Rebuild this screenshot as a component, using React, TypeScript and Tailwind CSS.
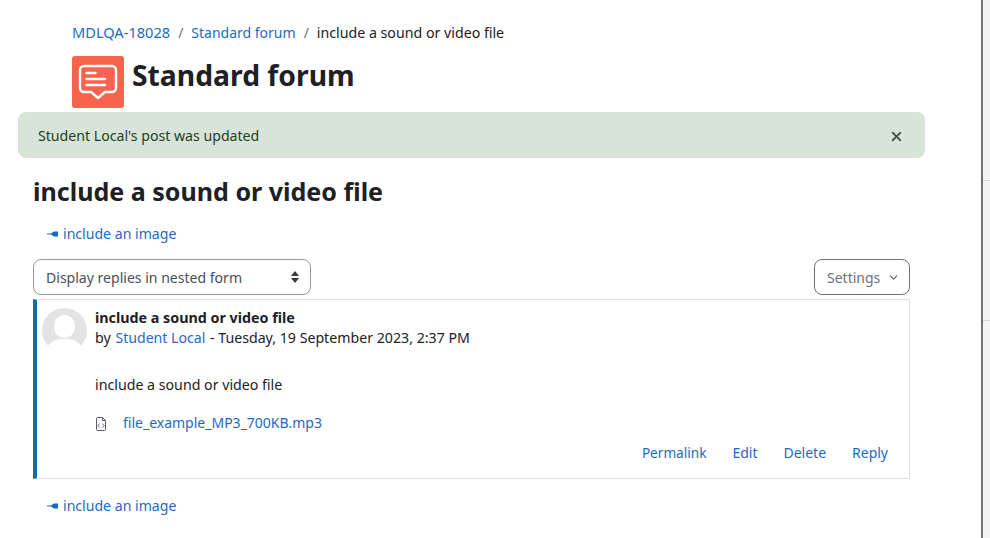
import { ChevronDown, X } from 'lucide-react'

const font = "font-['Noto_Sans','Open_Sans',sans-serif]"

function NavLink() {
  return (
    <a className="flex items-center gap-[5px] text-[14.1px] leading-[20px] text-[#1d6bc0]">
      <svg className="w-[11px] h-[6px]" viewBox="0 0 11 6" fill="#0f6cbf">
        <path d="M0 2.500h4L7 0.500h4v5H7L4 3.500H0z" />
      </svg>
      include an image
    </a>
  )
}

export default function App() {
  return (
    <div className={`${font} flex h-[538px] w-[990px] overflow-hidden bg-white text-[14px] text-[#1d2125]`}>
      <main className="w-[981px] shrink-0 border-r-2 border-[#6f7479] box-content">
        {/* Breadcrumb */}
        <div className="flex items-baseline h-[20px] mt-[22px] ml-[72px] leading-[20px]">
          <a className="text-[#1d6bc0] text-[14.6px] leading-[20px]">MDLQA-18028</a>
          <span className="mx-[8px] text-[#6a737b]">/</span>
          <a className="text-[#1d6bc0]">Standard forum</a>
          <span className="mx-[8px] text-[#6a737b]">/</span>
          <span className="text-[14.2px]">include a sound or video file</span>
        </div>

        {/* Page header */}
        <div className="flex items-center gap-[8px] ml-[72px] mt-[14px]">
          <div className="w-[52px] h-[52px] rounded-[3px] bg-[#f7634d]">
            <svg className="w-[52px] h-[52px]" viewBox="0 0 52 52" fill="none" stroke="white" strokeWidth="2.4" strokeLinecap="round" strokeLinejoin="round">
              <path d="M12 10h28a4 4 0 0 1 4 4v18a4 4 0 0 1-4 4h-7l-7 6-7-6h-7a4 4 0 0 1-4-4V14a4 4 0 0 1 4-4z" />
              <path d="M14.500 17h9M14.500 23h18.500M14.500 29h18.500" />
            </svg>
          </div>
          <h1 className="text-[28.3px] font-bold leading-[38px] -mt-[14px]">Standard forum</h1>
        </div>

        {/* Alert */}
        <div className="flex items-center justify-between ml-[18px] mt-[4px] w-[907px] h-[46px] rounded-[8px] bg-[#d8e4d8] pl-[20px] pr-[21px] text-[14.13px] text-[#1c3f26]">
          <span className="mt-[1px]">Student Local's post was updated</span>
          <X className="w-[15px] h-[15px] mt-[3px] text-[#4f5650]" strokeWidth={3.2} />
        </div>

        <div className="ml-[33px] w-[877px]">
          <h2 className="mt-[17px] text-[25.050px] font-bold leading-[32px]">include a sound or video file</h2>
          <div className="mt-[17px] ml-[14px]">
            <NavLink />
          </div>

          {/* Controls */}
          <div className="flex justify-between mt-[15px]">
            <div className="flex items-center justify-between w-[278px] h-[36px] rounded-[8px] border border-[#8f959e] pl-[12px] pr-[11px] text-[#495057]">
              <span className="text-[14.06px] mt-[1px]">Display replies in nested form</span>
              <svg className="w-[8px] h-[12px]" viewBox="0 0 8 12" fill="#343a40">
                <path d="M4 0l4 5H0zM4 12L0 7h8z" />
              </svg>
            </div>
            <div className="flex items-center gap-[7px] w-[96px] h-[36px] rounded-[8px] border border-[#6a737b] pl-[12px] text-[#6a737b]">
              <span>Settings</span>
              <ChevronDown className="w-[13px] h-[13px] text-[#5a6268]" strokeWidth={2} />
            </div>
          </div>

          {/* Post */}
          <article className="relative mt-[4px] h-[180px] border border-[#dee2e6] border-l-[4px] border-l-[#0a6ea8] pl-[5px] pt-[8px]">
            <div className="flex gap-[8px]">
              <div className="relative w-[45px] h-[45px] rounded-full bg-[#e3e3e3] overflow-hidden shrink-0">
                <div className="absolute left-[12px] top-[7px] w-[21px] h-[23px] rounded-full bg-white" />
                <div className="absolute left-[3px] top-[31px] w-[39px] h-[24px] rounded-t-[16px] bg-white" />
              </div>
              <div>
                <div className="font-bold leading-[20px] text-[14.3px]">include a sound or video file</div>
                <div className="leading-[20px] text-[14.24px]">
                  by <a className="ml-[1px] text-[14.1px] text-[#1d6bc0]">Student Local</a>
                  <span className="ml-[1px] text-[14.18px]"> - Tuesday, 19 September 2023, 2:37 PM</span>
                </div>
              </div>
            </div>
            <p className="mt-[22px] ml-[53px] leading-[20px] text-[14.2px]">include a sound or video file</p>
            <div className="flex items-center mt-[18px] ml-[53px]">
              <svg className="w-[12px] h-[14px] mt-[2px]" viewBox="0 0 12 14" fill="none" stroke="#5a5f64" strokeWidth="1">
                <path d="M1.500 1.500a1 1 0 0 1 1-1h5l3 3v9a1 1 0 0 1-1 1h-7a1 1 0 0 1-1-1z" />
                <path d="M7.500 0.500v3h3" />
                <path d="M4.500 6.500l-1.500 2 1.500 2M7.500 6.500l1.500 2-1.500 2" strokeWidth="0.9" />
              </svg>
              <a className="ml-[16px] text-[#1d6bc0] leading-[20px]">file_example_MP3_700KB.mp3</a>
            </div>
            <div className="flex justify-end items-baseline gap-[26px] mt-[10px] pr-[21px] text-[#1d6bc0] leading-[20px]">
              <a className="text-[13.6px]">Permalink</a>
              <a>Edit</a>
              <a>Delete</a>
              <a>Reply</a>
            </div>
          </article>

          <div className="mt-[17px] ml-[14px]">
            <NavLink />
          </div>
        </div>
      </main>

      {/* Right edge */}
      <aside className="flex-1 bg-[#f3f3f3]">
        <div className="mt-[180px] h-[141px] border-y border-[#d6d6d6]" />
      </aside>
    </div>
  )
}
